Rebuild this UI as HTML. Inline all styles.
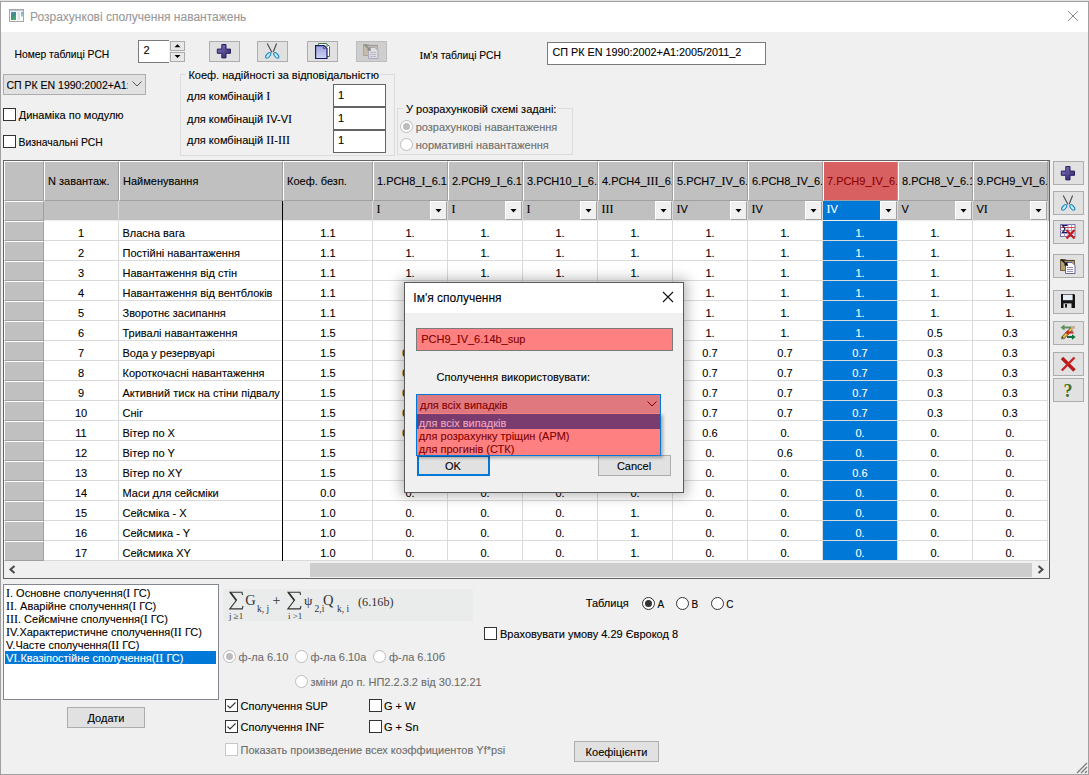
<!DOCTYPE html>
<html><head><meta charset="utf-8"><style>
html,body{margin:0;padding:0;width:1089px;height:775px;overflow:hidden;background:#f0f0f0}
.r{position:absolute}
.clip{position:absolute;overflow:hidden}
.si{font-family:"Liberation Serif",serif;font-size:1.09em}
.t{position:absolute;font-family:"Liberation Sans", sans-serif;white-space:nowrap;-webkit-text-stroke-width:0.1px}
</style></head><body>
<div class="r" style="left:0px;top:0px;width:1089px;height:1px;background:#e2e2e2"></div>
<div class="r" style="left:0px;top:1px;width:1089px;height:774px;background:#f0f0f0;box-sizing:border-box;border:1px solid #a0a0a0;"></div>
<div class="r" style="left:1px;top:2px;width:1087px;height:30px;background:#fff"></div>
<svg class="r" style="left:9px;top:9px" width="15" height="13" viewBox="0 0 15 13">
<defs><linearGradient id="tg" x1="0" y1="0" x2="0.6" y2="1"><stop offset="0" stop-color="#5f86c4"/><stop offset="0.5" stop-color="#3f8e8e"/><stop offset="1" stop-color="#4caa5e"/></linearGradient>
<linearGradient id="tg2" x1="0" y1="0" x2="0" y2="1"><stop offset="0" stop-color="#7fa6d8"/><stop offset="1" stop-color="#9ad89a"/></linearGradient></defs>
<rect x="0.5" y="0.5" width="14" height="12" fill="#fafafa" stroke="#a4a8ae"/>
<rect x="1" y="1" width="13" height="1.2" fill="#c4c8ce"/>
<rect x="2" y="3" width="5" height="8" fill="url(#tg)"/>
<rect x="8.5" y="3" width="2.5" height="8" fill="#e2e2e2"/><rect x="12" y="3" width="2" height="4.5" fill="url(#tg2)"/>
</svg>
<div class="t " style="left:30px;top:11.00px;font-size:12px;line-height:12px;color:#999;">Розрахункові сполучення навантажень</div>
<svg class="r" style="left:1067px;top:10px" width="12" height="12" viewBox="0 0 12 12"><path d="M1 1L11 11M11 1L1 11" stroke="#8a8a8a" stroke-width="1"/></svg>
<div class="t " style="left:14.5px;top:50.00px;font-size:10.3px;line-height:10.3px;color:#000;">Номер таблиці РСН</div>
<div class="r" style="left:138px;top:40px;width:31px;height:23px;background:#fff;border:1px solid #7a7a7a;border-right:none;box-sizing:border-box"></div>
<div class="t " style="left:143.5px;top:45.00px;font-size:11px;line-height:11px;color:#000;">2</div>
<div class="r" style="left:170px;top:41px;width:15px;height:10px;background:#e8e8e8;border:1px solid #acacac;box-sizing:border-box"></div>
<div class="r" style="left:170px;top:52px;width:15px;height:10px;background:#e8e8e8;border:1px solid #acacac;box-sizing:border-box"></div>
<svg class="r" style="left:170px;top:41px" width="15" height="21"><path d="M4.5 6.2L7.5 3.2L10.5 6.2Z" fill="#000"/><path d="M4.5 14L7.5 17L10.5 14Z" fill="#000"/></svg>
<div class="r" style="left:209px;top:41px;width:31px;height:21px;background:#e1e1e1;border:1px solid #adadad;box-sizing:border-box"></div>
<div class="r" style="left:257px;top:41px;width:31px;height:21px;background:#e1e1e1;border:1px solid #adadad;box-sizing:border-box"></div>
<div class="r" style="left:307px;top:41px;width:31px;height:21px;background:#e1e1e1;border:1px solid #adadad;box-sizing:border-box"></div>
<div class="r" style="left:356px;top:41px;width:31px;height:21px;background:#cecece;border:1px solid #bdbdbd;box-sizing:border-box"></div>
<svg class="r" style="left:216px;top:43px;opacity:1" width="16" height="16" viewBox="0 0 16 16"><defs><linearGradient id="pg" x1="0" y1="0" x2="1" y2="1"><stop offset="0" stop-color="#8a7cc8"/><stop offset="1" stop-color="#2a1e60"/></linearGradient></defs><path d="M5.8 1.5h4.2v4.6h4.5v4.2h-4.5v4.6h-4.2v-4.6h-4.5v-4.2h4.5z" fill="url(#pg)" stroke="#2a1e5e" stroke-width="1"/></svg>
<svg class="r" style="left:264px;top:43px;opacity:1" width="16" height="16" viewBox="0 0 16 16"><path d="M3.2 0.5L8 9.6M12.6 0.5L9.2 9" stroke="#4a4a4a" stroke-width="1.1"/><g fill="#c4ecfa" stroke="#1a82b8" stroke-width="1.1"><ellipse cx="4.2" cy="12.4" rx="1.7" ry="3.3" transform="rotate(40 4.2 12.4)"/><ellipse cx="12.3" cy="12.4" rx="1.7" ry="3.3" transform="rotate(-40 12.3 12.4)"/></g></svg>
<svg class="r" style="left:315px;top:43px;opacity:1" width="16" height="16" viewBox="0 0 16 16"><defs><linearGradient id="cg" x1="0" y1="0" x2="0" y2="1"><stop offset="0" stop-color="#9aa4dc"/><stop offset="1" stop-color="#cfd4f0"/></linearGradient></defs><path d="M3.5 0.5h8l3 3v10h-11z" fill="#fff" stroke="#3c7a3c"/><circle cx="12" cy="2.5" r="1" fill="#fff" stroke="#3c7a3c" stroke-width="0.8"/><path d="M0.6 2.6h8.4l3 3v10h-11.4z" fill="url(#cg)" stroke="#1a1866" stroke-width="1.2"/><circle cx="9.3" cy="4.8" r="1" fill="#fff" stroke="#1a1866" stroke-width="0.8"/></svg>
<svg class="r" style="left:363px;top:43px;opacity:0.35" width="16" height="16" viewBox="0 0 16 16"><path d="M0.5 1.5h5l1 1h8v10h-14z" fill="#b4a070" stroke="#6e6040"/><path d="M0.5 2.5h14" stroke="#4a4030" stroke-width="1.2"/><path d="M5.5 4.5h6.5l3 3v8h-9.5z" fill="#fff" stroke="#6a60a0"/><path d="M7 9.5h6M7 11.5h6M7 13.5h6" stroke="#8a84b8" stroke-width="0.9"/><path d="M1.5 1.5L6.5 6.5" stroke="#111" stroke-width="1.5"/><path d="M8 8L3.8 7.2L7.2 3.8z" fill="#111"/></svg>
<div class="t " style="left:419.5px;top:50.00px;font-size:10.3px;line-height:10.3px;color:#000;"><span class="si">І</span>м&#x27;я таблиці РСН</div>
<div class="r" style="left:547px;top:42px;width:219px;height:23px;background:#fff;border:1px solid #7a7a7a;box-sizing:border-box"></div>
<div class="t " style="left:552.5px;top:47.00px;font-size:10.8px;line-height:10.8px;color:#000;">СП РК EN 1990:2002+A1:2005/2011_2</div>
<div class="r" style="left:3px;top:74px;width:143px;height:21px;background:#e1e1e1;border:1px solid #adadad;box-sizing:border-box"></div>
<div class="t " style="left:6.5px;top:79.50px;font-size:10.5px;line-height:10.5px;color:#000;width:121px;overflow:hidden">СП РК EN 1990:2002+A1:2005/2011_2</div>
<svg class="r" style="left:132px;top:81px" width="10" height="6"><path d="M0.5 0.5L5 5L9.5 0.5" fill="none" stroke="#555" stroke-width="1"/></svg>
<div class="r" style="left:3px;top:108px;width:13px;height:13px;background:#fff;border:1px solid #333;box-sizing:border-box"></div>
<div class="t " style="left:18.7px;top:110.00px;font-size:11px;line-height:11px;color:#000;">Динаміка по модулю</div>
<div class="r" style="left:3px;top:135px;width:13px;height:13px;background:#fff;border:1px solid #333;box-sizing:border-box"></div>
<div class="t " style="left:18.5px;top:138.00px;font-size:10.4px;line-height:10.4px;color:#000;">Визначальні РСН</div>
<div class="r" style="left:180px;top:74px;width:215px;height:82px;border:1px solid #dcdcdc;box-sizing:border-box"></div>
<div class="r" style="left:186px;top:70px;width:194px;height:10px;background:#f0f0f0"></div>
<div class="t " style="left:188.4px;top:70.00px;font-size:11px;line-height:11px;color:#000;">Коеф. надійності за відповідальністю</div>
<div class="t " style="left:187px;top:91.00px;font-size:11px;line-height:11px;color:#000;">для комбінацій <span class="si">I</span></div>
<div class="t " style="left:187px;top:114.00px;font-size:11px;line-height:11px;color:#000;">для комбінацій <span class="si">I</span>V-V<span class="si">I</span></div>
<div class="t " style="left:187px;top:135.00px;font-size:11px;line-height:11px;color:#000;">для комбінацій <span class="si">I</span><span class="si">I</span>-<span class="si">I</span><span class="si">I</span><span class="si">I</span></div>
<div class="r" style="left:333px;top:84px;width:53px;height:23px;background:#fff;border:1px solid #646464;box-sizing:border-box"></div>
<div class="r" style="left:333px;top:107px;width:53px;height:23px;background:#fff;border:1px solid #646464;box-sizing:border-box"></div>
<div class="r" style="left:333px;top:130px;width:53px;height:23px;background:#fff;border:1px solid #646464;box-sizing:border-box"></div>
<div class="t " style="left:338px;top:90.00px;font-size:11px;line-height:11px;color:#000;">1</div>
<div class="t " style="left:338px;top:113.00px;font-size:11px;line-height:11px;color:#000;">1</div>
<div class="t " style="left:338px;top:135.00px;font-size:11px;line-height:11px;color:#000;">1</div>
<div class="r" style="left:397px;top:108px;width:176px;height:47px;border:1px solid #dcdcdc;box-sizing:border-box"></div>
<div class="r" style="left:403px;top:104px;width:155px;height:10px;background:#f0f0f0"></div>
<div class="t " style="left:406px;top:104.00px;font-size:11px;line-height:11px;color:#000;">У розрахунковій схемі задані:</div>
<svg class="r" style="left:400px;top:120px" width="13" height="13"><circle cx="6.5" cy="6.5" r="6" fill="#fff" stroke="#bcbcbc"/><circle cx="6.5" cy="6.5" r="3.5" fill="#bcbcbc"/></svg>
<div class="t " style="left:415.7px;top:122.00px;font-size:11px;line-height:11px;color:#6d6d6d;">розрахункові навантаження</div>
<svg class="r" style="left:400px;top:138px" width="13" height="13"><circle cx="6.5" cy="6.5" r="6" fill="#fff" stroke="#bcbcbc"/></svg>
<div class="t " style="left:415.7px;top:140.00px;font-size:11px;line-height:11px;color:#6d6d6d;">нормативні навантаження</div>
<div class="r" style="left:3px;top:160px;width:1047px;height:419px;background:#f0f0f0;border:1px solid #646464;box-sizing:border-box"></div>
<div class="r" style="left:4px;top:161px;width:1045px;height:400px;background:#fff"></div>
<div class="r" style="left:4px;top:161px;width:40px;height:40px;background:#c0c0c0;border-top:1px solid #fff;border-left:1px solid #fff;border-right:1px solid #a0a0a0;border-bottom:1px solid #a0a0a0;box-sizing:border-box"></div>
<div class="r" style="left:44px;top:161px;width:75px;height:40px;background:#c0c0c0;border-top:1px solid #fff;border-left:1px solid #fff;border-right:1px solid #a0a0a0;border-bottom:1px solid #a0a0a0;box-sizing:border-box"></div>
<div class="r" style="left:119px;top:161px;width:164px;height:40px;background:#c0c0c0;border-top:1px solid #fff;border-left:1px solid #fff;border-right:1px solid #a0a0a0;border-bottom:1px solid #a0a0a0;box-sizing:border-box"></div>
<div class="r" style="left:283px;top:161px;width:90px;height:40px;background:#c0c0c0;border-top:1px solid #fff;border-left:1px solid #fff;border-right:1px solid #a0a0a0;border-bottom:1px solid #a0a0a0;box-sizing:border-box"></div>
<div class="r" style="left:373px;top:161px;width:75px;height:40px;background:#c0c0c0;border-top:1px solid #fff;border-left:1px solid #fff;border-right:1px solid #a0a0a0;border-bottom:1px solid #a0a0a0;box-sizing:border-box"></div>
<div class="r" style="left:448px;top:161px;width:75px;height:40px;background:#c0c0c0;border-top:1px solid #fff;border-left:1px solid #fff;border-right:1px solid #a0a0a0;border-bottom:1px solid #a0a0a0;box-sizing:border-box"></div>
<div class="r" style="left:523px;top:161px;width:75px;height:40px;background:#c0c0c0;border-top:1px solid #fff;border-left:1px solid #fff;border-right:1px solid #a0a0a0;border-bottom:1px solid #a0a0a0;box-sizing:border-box"></div>
<div class="r" style="left:598px;top:161px;width:75px;height:40px;background:#c0c0c0;border-top:1px solid #fff;border-left:1px solid #fff;border-right:1px solid #a0a0a0;border-bottom:1px solid #a0a0a0;box-sizing:border-box"></div>
<div class="r" style="left:673px;top:161px;width:75px;height:40px;background:#c0c0c0;border-top:1px solid #fff;border-left:1px solid #fff;border-right:1px solid #a0a0a0;border-bottom:1px solid #a0a0a0;box-sizing:border-box"></div>
<div class="r" style="left:748px;top:161px;width:75px;height:40px;background:#c0c0c0;border-top:1px solid #fff;border-left:1px solid #fff;border-right:1px solid #a0a0a0;border-bottom:1px solid #a0a0a0;box-sizing:border-box"></div>
<div class="r" style="left:823px;top:161px;width:75px;height:40px;background:#d96060;border-top:1px solid #fff;border-left:1px solid #fff;border-right:1px solid #a0a0a0;border-bottom:1px solid #a0a0a0;box-sizing:border-box"></div>
<div class="r" style="left:898px;top:161px;width:75px;height:40px;background:#c0c0c0;border-top:1px solid #fff;border-left:1px solid #fff;border-right:1px solid #a0a0a0;border-bottom:1px solid #a0a0a0;box-sizing:border-box"></div>
<div class="r" style="left:973px;top:161px;width:75px;height:40px;background:#c0c0c0;border-top:1px solid #fff;border-left:1px solid #fff;border-right:1px solid #a0a0a0;border-bottom:1px solid #a0a0a0;box-sizing:border-box"></div>
<div class="r" style="left:1048px;top:161px;width:1px;height:60px;background:#c0c0c0"></div>
<div class="r" style="left:4px;top:201px;width:40px;height:19px;background:#c0c0c0"></div>
<div class="r" style="left:43px;top:201px;width:76px;height:19px;background:#c0c0c0"></div>
<div class="r" style="left:118px;top:201px;width:165px;height:19px;background:#c0c0c0"></div>
<div class="r" style="left:282px;top:201px;width:91px;height:19px;background:#c0c0c0"></div>
<div class="r" style="left:372px;top:201px;width:76px;height:19px;background:#c0c0c0"></div>
<div class="r" style="left:447px;top:201px;width:76px;height:19px;background:#c0c0c0"></div>
<div class="r" style="left:522px;top:201px;width:76px;height:19px;background:#c0c0c0"></div>
<div class="r" style="left:597px;top:201px;width:76px;height:19px;background:#c0c0c0"></div>
<div class="r" style="left:672px;top:201px;width:76px;height:19px;background:#c0c0c0"></div>
<div class="r" style="left:747px;top:201px;width:76px;height:19px;background:#c0c0c0"></div>
<div class="r" style="left:822px;top:201px;width:76px;height:19px;background:#c0c0c0"></div>
<div class="r" style="left:897px;top:201px;width:76px;height:19px;background:#c0c0c0"></div>
<div class="r" style="left:972px;top:201px;width:76px;height:19px;background:#c0c0c0"></div>
<div class="r" style="left:44px;top:220px;width:1004px;height:1px;background:#ececec"></div>
<div class="r" style="left:4px;top:201px;width:40px;height:20px;background:#c0c0c0;border-top:1px solid #fff;border-left:1px solid #fff;border-right:1px solid #a0a0a0;border-bottom:1px solid #a0a0a0;box-sizing:border-box"></div>
<div class="clip" style="left:44px;top:161px;width:74px;height:40px">
<div class="t" style="left:4px;top:14.69px;font-size:11px;line-height:11px;color:#000">N завантаж.</div>
</div>
<div class="clip" style="left:119px;top:161px;width:163px;height:40px">
<div class="t" style="left:4px;top:14.69px;font-size:11px;line-height:11px;color:#000">Найменування</div>
</div>
<div class="clip" style="left:283px;top:161px;width:89px;height:40px">
<div class="t" style="left:4px;top:14.69px;font-size:11px;line-height:11px;color:#000">Коеф. безп.</div>
</div>
<div class="clip" style="left:373px;top:161px;width:74px;height:40px">
<div class="t" style="left:4px;top:14.69px;font-size:11px;line-height:11px;color:#000">1.РСН8_<span class="si">I</span>_6.10</div>
</div>
<div class="clip" style="left:448px;top:161px;width:74px;height:40px">
<div class="t" style="left:4px;top:14.69px;font-size:11px;line-height:11px;color:#000">2.РСН9_<span class="si">I</span>_6.10</div>
</div>
<div class="clip" style="left:523px;top:161px;width:74px;height:40px">
<div class="t" style="left:4px;top:14.69px;font-size:11px;line-height:11px;color:#000">3.РСН10_<span class="si">I</span>_6.1</div>
</div>
<div class="clip" style="left:598px;top:161px;width:74px;height:40px">
<div class="t" style="left:4px;top:14.69px;font-size:11px;line-height:11px;color:#000">4.РСН4_<span class="si">I</span><span class="si">I</span><span class="si">I</span>_6.1</div>
</div>
<div class="clip" style="left:673px;top:161px;width:74px;height:40px">
<div class="t" style="left:4px;top:14.69px;font-size:11px;line-height:11px;color:#000">5.РСН7_<span class="si">I</span>V_6.1</div>
</div>
<div class="clip" style="left:748px;top:161px;width:74px;height:40px">
<div class="t" style="left:4px;top:14.69px;font-size:11px;line-height:11px;color:#000">6.РСН8_<span class="si">I</span>V_6.1</div>
</div>
<div class="clip" style="left:823px;top:161px;width:74px;height:40px">
<div class="t" style="left:4px;top:14.69px;font-size:11px;line-height:11px;color:#8c0000">7.РСН9_<span class="si">I</span>V_6.1</div>
</div>
<div class="clip" style="left:898px;top:161px;width:74px;height:40px">
<div class="t" style="left:4px;top:14.69px;font-size:11px;line-height:11px;color:#000">8.РСН8_V_6.1</div>
</div>
<div class="clip" style="left:973px;top:161px;width:74px;height:40px">
<div class="t" style="left:4px;top:14.69px;font-size:11px;line-height:11px;color:#000">9.РСН9_V<span class="si">I</span>_6.1</div>
</div>
<div class="t " style="left:376.5px;top:204.00px;font-size:11px;line-height:11px;color:#000;"><span class="si">I</span></div>
<div class="r" style="left:430px;top:201px;width:17px;height:19px;background:#f0f0f0;border-left:1px solid #fff;border-top:1px solid #fff;border-right:1px solid #a0a0a0;border-bottom:1px solid #a0a0a0;box-sizing:border-box"></div>
<svg class="r" style="left:430px;top:201px" width="17" height="19"><path d="M5.5 8L8.5 11.5L11.5 8Z" fill="#000"/></svg>
<div class="t " style="left:451.5px;top:204.00px;font-size:11px;line-height:11px;color:#000;"><span class="si">I</span></div>
<div class="r" style="left:505px;top:201px;width:17px;height:19px;background:#f0f0f0;border-left:1px solid #fff;border-top:1px solid #fff;border-right:1px solid #a0a0a0;border-bottom:1px solid #a0a0a0;box-sizing:border-box"></div>
<svg class="r" style="left:505px;top:201px" width="17" height="19"><path d="M5.5 8L8.5 11.5L11.5 8Z" fill="#000"/></svg>
<div class="t " style="left:526.5px;top:204.00px;font-size:11px;line-height:11px;color:#000;"><span class="si">I</span></div>
<div class="r" style="left:580px;top:201px;width:17px;height:19px;background:#f0f0f0;border-left:1px solid #fff;border-top:1px solid #fff;border-right:1px solid #a0a0a0;border-bottom:1px solid #a0a0a0;box-sizing:border-box"></div>
<svg class="r" style="left:580px;top:201px" width="17" height="19"><path d="M5.5 8L8.5 11.5L11.5 8Z" fill="#000"/></svg>
<div class="t " style="left:601.5px;top:204.00px;font-size:11px;line-height:11px;color:#000;"><span class="si">I</span><span class="si">I</span><span class="si">I</span></div>
<div class="r" style="left:655px;top:201px;width:17px;height:19px;background:#f0f0f0;border-left:1px solid #fff;border-top:1px solid #fff;border-right:1px solid #a0a0a0;border-bottom:1px solid #a0a0a0;box-sizing:border-box"></div>
<svg class="r" style="left:655px;top:201px" width="17" height="19"><path d="M5.5 8L8.5 11.5L11.5 8Z" fill="#000"/></svg>
<div class="t " style="left:676.5px;top:204.00px;font-size:11px;line-height:11px;color:#000;"><span class="si">I</span>V</div>
<div class="r" style="left:730px;top:201px;width:17px;height:19px;background:#f0f0f0;border-left:1px solid #fff;border-top:1px solid #fff;border-right:1px solid #a0a0a0;border-bottom:1px solid #a0a0a0;box-sizing:border-box"></div>
<svg class="r" style="left:730px;top:201px" width="17" height="19"><path d="M5.5 8L8.5 11.5L11.5 8Z" fill="#000"/></svg>
<div class="t " style="left:751.5px;top:204.00px;font-size:11px;line-height:11px;color:#000;"><span class="si">I</span>V</div>
<div class="r" style="left:805px;top:201px;width:17px;height:19px;background:#f0f0f0;border-left:1px solid #fff;border-top:1px solid #fff;border-right:1px solid #a0a0a0;border-bottom:1px solid #a0a0a0;box-sizing:border-box"></div>
<svg class="r" style="left:805px;top:201px" width="17" height="19"><path d="M5.5 8L8.5 11.5L11.5 8Z" fill="#000"/></svg>
<div class="r" style="left:823px;top:201px;width:57px;height:19px;background:#0078d7"></div>
<div class="t " style="left:826.5px;top:204.00px;font-size:11px;line-height:11px;color:#fff;"><span class="si">I</span>V</div>
<div class="r" style="left:880px;top:201px;width:17px;height:19px;background:#f0f0f0;border-left:1px solid #fff;border-top:1px solid #fff;border-right:1px solid #a0a0a0;border-bottom:1px solid #a0a0a0;box-sizing:border-box"></div>
<svg class="r" style="left:880px;top:201px" width="17" height="19"><path d="M5.5 8L8.5 11.5L11.5 8Z" fill="#000"/></svg>
<div class="t " style="left:901.5px;top:204.00px;font-size:11px;line-height:11px;color:#000;">V</div>
<div class="r" style="left:955px;top:201px;width:17px;height:19px;background:#f0f0f0;border-left:1px solid #fff;border-top:1px solid #fff;border-right:1px solid #a0a0a0;border-bottom:1px solid #a0a0a0;box-sizing:border-box"></div>
<svg class="r" style="left:955px;top:201px" width="17" height="19"><path d="M5.5 8L8.5 11.5L11.5 8Z" fill="#000"/></svg>
<div class="t " style="left:976.5px;top:204.00px;font-size:11px;line-height:11px;color:#000;">V<span class="si">I</span></div>
<div class="r" style="left:1030px;top:201px;width:17px;height:19px;background:#f0f0f0;border-left:1px solid #fff;border-top:1px solid #fff;border-right:1px solid #a0a0a0;border-bottom:1px solid #a0a0a0;box-sizing:border-box"></div>
<svg class="r" style="left:1030px;top:201px" width="17" height="19"><path d="M5.5 8L8.5 11.5L11.5 8Z" fill="#000"/></svg>
<div class="r" style="left:4px;top:221px;width:40px;height:20px;background:#c0c0c0;border-top:1px solid #fff;border-left:1px solid #fff;border-right:1px solid #a0a0a0;border-bottom:1px solid #a0a0a0;box-sizing:border-box"></div>
<div class="r" style="left:823px;top:221px;width:75px;height:19px;background:#0078d7"></div>
<div class="r" style="left:44px;top:240px;width:1004px;height:1px;background:#dadada"></div>
<div class="t" style="left:-19px;width:200px;text-align:center;top:228.00px;font-size:11px;line-height:11px;color:#000;">1</div>
<div class="clip" style="left:119px;top:221px;width:163px;height:19px"><div class="t" style="left:3.5px;top:6.69px;font-size:11px;line-height:11px">Власна вага</div></div>
<div class="t" style="left:228px;width:200px;text-align:center;top:228.00px;font-size:11px;line-height:11px;color:#000;">1.1</div>
<div class="t" style="left:310px;width:200px;text-align:center;top:228.00px;font-size:11px;line-height:11px;color:#000;">1.</div>
<div class="t" style="left:385px;width:200px;text-align:center;top:228.00px;font-size:11px;line-height:11px;color:#000;">1.</div>
<div class="t" style="left:460px;width:200px;text-align:center;top:228.00px;font-size:11px;line-height:11px;color:#000;">1.</div>
<div class="t" style="left:535px;width:200px;text-align:center;top:228.00px;font-size:11px;line-height:11px;color:#000;">1.</div>
<div class="t" style="left:610px;width:200px;text-align:center;top:228.00px;font-size:11px;line-height:11px;color:#000;">1.</div>
<div class="t" style="left:685px;width:200px;text-align:center;top:228.00px;font-size:11px;line-height:11px;color:#000;">1.</div>
<div class="t" style="left:760px;width:200px;text-align:center;top:228.00px;font-size:11px;line-height:11px;color:#fff;">1.</div>
<div class="t" style="left:835px;width:200px;text-align:center;top:228.00px;font-size:11px;line-height:11px;color:#000;">1.</div>
<div class="t" style="left:910px;width:200px;text-align:center;top:228.00px;font-size:11px;line-height:11px;color:#000;">1.</div>
<div class="r" style="left:4px;top:241px;width:40px;height:20px;background:#c0c0c0;border-top:1px solid #fff;border-left:1px solid #fff;border-right:1px solid #a0a0a0;border-bottom:1px solid #a0a0a0;box-sizing:border-box"></div>
<div class="r" style="left:823px;top:241px;width:75px;height:19px;background:#0078d7"></div>
<div class="r" style="left:44px;top:260px;width:1004px;height:1px;background:#dadada"></div>
<div class="t" style="left:-19px;width:200px;text-align:center;top:248.00px;font-size:11px;line-height:11px;color:#000;">2</div>
<div class="clip" style="left:119px;top:241px;width:163px;height:19px"><div class="t" style="left:3.5px;top:6.69px;font-size:11px;line-height:11px">Постійні навантаження</div></div>
<div class="t" style="left:228px;width:200px;text-align:center;top:248.00px;font-size:11px;line-height:11px;color:#000;">1.1</div>
<div class="t" style="left:310px;width:200px;text-align:center;top:248.00px;font-size:11px;line-height:11px;color:#000;">1.</div>
<div class="t" style="left:385px;width:200px;text-align:center;top:248.00px;font-size:11px;line-height:11px;color:#000;">1.</div>
<div class="t" style="left:460px;width:200px;text-align:center;top:248.00px;font-size:11px;line-height:11px;color:#000;">1.</div>
<div class="t" style="left:535px;width:200px;text-align:center;top:248.00px;font-size:11px;line-height:11px;color:#000;">1.</div>
<div class="t" style="left:610px;width:200px;text-align:center;top:248.00px;font-size:11px;line-height:11px;color:#000;">1.</div>
<div class="t" style="left:685px;width:200px;text-align:center;top:248.00px;font-size:11px;line-height:11px;color:#000;">1.</div>
<div class="t" style="left:760px;width:200px;text-align:center;top:248.00px;font-size:11px;line-height:11px;color:#fff;">1.</div>
<div class="t" style="left:835px;width:200px;text-align:center;top:248.00px;font-size:11px;line-height:11px;color:#000;">1.</div>
<div class="t" style="left:910px;width:200px;text-align:center;top:248.00px;font-size:11px;line-height:11px;color:#000;">1.</div>
<div class="r" style="left:4px;top:261px;width:40px;height:20px;background:#c0c0c0;border-top:1px solid #fff;border-left:1px solid #fff;border-right:1px solid #a0a0a0;border-bottom:1px solid #a0a0a0;box-sizing:border-box"></div>
<div class="r" style="left:823px;top:261px;width:75px;height:19px;background:#0078d7"></div>
<div class="r" style="left:44px;top:280px;width:1004px;height:1px;background:#dadada"></div>
<div class="t" style="left:-19px;width:200px;text-align:center;top:268.00px;font-size:11px;line-height:11px;color:#000;">3</div>
<div class="clip" style="left:119px;top:261px;width:163px;height:19px"><div class="t" style="left:3.5px;top:6.69px;font-size:11px;line-height:11px">Навантаження від стін</div></div>
<div class="t" style="left:228px;width:200px;text-align:center;top:268.00px;font-size:11px;line-height:11px;color:#000;">1.1</div>
<div class="t" style="left:310px;width:200px;text-align:center;top:268.00px;font-size:11px;line-height:11px;color:#000;">1.</div>
<div class="t" style="left:385px;width:200px;text-align:center;top:268.00px;font-size:11px;line-height:11px;color:#000;">1.</div>
<div class="t" style="left:460px;width:200px;text-align:center;top:268.00px;font-size:11px;line-height:11px;color:#000;">1.</div>
<div class="t" style="left:535px;width:200px;text-align:center;top:268.00px;font-size:11px;line-height:11px;color:#000;">1.</div>
<div class="t" style="left:610px;width:200px;text-align:center;top:268.00px;font-size:11px;line-height:11px;color:#000;">1.</div>
<div class="t" style="left:685px;width:200px;text-align:center;top:268.00px;font-size:11px;line-height:11px;color:#000;">1.</div>
<div class="t" style="left:760px;width:200px;text-align:center;top:268.00px;font-size:11px;line-height:11px;color:#fff;">1.</div>
<div class="t" style="left:835px;width:200px;text-align:center;top:268.00px;font-size:11px;line-height:11px;color:#000;">1.</div>
<div class="t" style="left:910px;width:200px;text-align:center;top:268.00px;font-size:11px;line-height:11px;color:#000;">1.</div>
<div class="r" style="left:4px;top:281px;width:40px;height:20px;background:#c0c0c0;border-top:1px solid #fff;border-left:1px solid #fff;border-right:1px solid #a0a0a0;border-bottom:1px solid #a0a0a0;box-sizing:border-box"></div>
<div class="r" style="left:823px;top:281px;width:75px;height:19px;background:#0078d7"></div>
<div class="r" style="left:44px;top:300px;width:1004px;height:1px;background:#dadada"></div>
<div class="t" style="left:-19px;width:200px;text-align:center;top:288.00px;font-size:11px;line-height:11px;color:#000;">4</div>
<div class="clip" style="left:119px;top:281px;width:163px;height:19px"><div class="t" style="left:3.5px;top:6.69px;font-size:11px;line-height:11px">Навантаження від вентблоків</div></div>
<div class="t" style="left:228px;width:200px;text-align:center;top:288.00px;font-size:11px;line-height:11px;color:#000;">1.1</div>
<div class="t" style="left:310px;width:200px;text-align:center;top:288.00px;font-size:11px;line-height:11px;color:#000;">1.</div>
<div class="t" style="left:385px;width:200px;text-align:center;top:288.00px;font-size:11px;line-height:11px;color:#000;">1.</div>
<div class="t" style="left:460px;width:200px;text-align:center;top:288.00px;font-size:11px;line-height:11px;color:#000;">1.</div>
<div class="t" style="left:535px;width:200px;text-align:center;top:288.00px;font-size:11px;line-height:11px;color:#000;">1.</div>
<div class="t" style="left:610px;width:200px;text-align:center;top:288.00px;font-size:11px;line-height:11px;color:#000;">1.</div>
<div class="t" style="left:685px;width:200px;text-align:center;top:288.00px;font-size:11px;line-height:11px;color:#000;">1.</div>
<div class="t" style="left:760px;width:200px;text-align:center;top:288.00px;font-size:11px;line-height:11px;color:#fff;">1.</div>
<div class="t" style="left:835px;width:200px;text-align:center;top:288.00px;font-size:11px;line-height:11px;color:#000;">1.</div>
<div class="t" style="left:910px;width:200px;text-align:center;top:288.00px;font-size:11px;line-height:11px;color:#000;">1.</div>
<div class="r" style="left:4px;top:301px;width:40px;height:20px;background:#c0c0c0;border-top:1px solid #fff;border-left:1px solid #fff;border-right:1px solid #a0a0a0;border-bottom:1px solid #a0a0a0;box-sizing:border-box"></div>
<div class="r" style="left:823px;top:301px;width:75px;height:19px;background:#0078d7"></div>
<div class="r" style="left:44px;top:320px;width:1004px;height:1px;background:#dadada"></div>
<div class="t" style="left:-19px;width:200px;text-align:center;top:308.00px;font-size:11px;line-height:11px;color:#000;">5</div>
<div class="clip" style="left:119px;top:301px;width:163px;height:19px"><div class="t" style="left:3.5px;top:6.69px;font-size:11px;line-height:11px">Зворотнє засипання</div></div>
<div class="t" style="left:228px;width:200px;text-align:center;top:308.00px;font-size:11px;line-height:11px;color:#000;">1.1</div>
<div class="t" style="left:310px;width:200px;text-align:center;top:308.00px;font-size:11px;line-height:11px;color:#000;">1.</div>
<div class="t" style="left:385px;width:200px;text-align:center;top:308.00px;font-size:11px;line-height:11px;color:#000;">1.</div>
<div class="t" style="left:460px;width:200px;text-align:center;top:308.00px;font-size:11px;line-height:11px;color:#000;">1.</div>
<div class="t" style="left:535px;width:200px;text-align:center;top:308.00px;font-size:11px;line-height:11px;color:#000;">1.</div>
<div class="t" style="left:610px;width:200px;text-align:center;top:308.00px;font-size:11px;line-height:11px;color:#000;">1.</div>
<div class="t" style="left:685px;width:200px;text-align:center;top:308.00px;font-size:11px;line-height:11px;color:#000;">1.</div>
<div class="t" style="left:760px;width:200px;text-align:center;top:308.00px;font-size:11px;line-height:11px;color:#fff;">1.</div>
<div class="t" style="left:835px;width:200px;text-align:center;top:308.00px;font-size:11px;line-height:11px;color:#000;">1.</div>
<div class="t" style="left:910px;width:200px;text-align:center;top:308.00px;font-size:11px;line-height:11px;color:#000;">1.</div>
<div class="r" style="left:4px;top:321px;width:40px;height:20px;background:#c0c0c0;border-top:1px solid #fff;border-left:1px solid #fff;border-right:1px solid #a0a0a0;border-bottom:1px solid #a0a0a0;box-sizing:border-box"></div>
<div class="r" style="left:823px;top:321px;width:75px;height:19px;background:#0078d7"></div>
<div class="r" style="left:44px;top:340px;width:1004px;height:1px;background:#dadada"></div>
<div class="t" style="left:-19px;width:200px;text-align:center;top:328.00px;font-size:11px;line-height:11px;color:#000;">6</div>
<div class="clip" style="left:119px;top:321px;width:163px;height:19px"><div class="t" style="left:3.5px;top:6.69px;font-size:11px;line-height:11px">Тривалі навантаження</div></div>
<div class="t" style="left:228px;width:200px;text-align:center;top:328.00px;font-size:11px;line-height:11px;color:#000;">1.5</div>
<div class="t" style="left:310px;width:200px;text-align:center;top:328.00px;font-size:11px;line-height:11px;color:#000;">1.</div>
<div class="t" style="left:385px;width:200px;text-align:center;top:328.00px;font-size:11px;line-height:11px;color:#000;">1.</div>
<div class="t" style="left:460px;width:200px;text-align:center;top:328.00px;font-size:11px;line-height:11px;color:#000;">1.</div>
<div class="t" style="left:535px;width:200px;text-align:center;top:328.00px;font-size:11px;line-height:11px;color:#000;">1.</div>
<div class="t" style="left:610px;width:200px;text-align:center;top:328.00px;font-size:11px;line-height:11px;color:#000;">1.</div>
<div class="t" style="left:685px;width:200px;text-align:center;top:328.00px;font-size:11px;line-height:11px;color:#000;">1.</div>
<div class="t" style="left:760px;width:200px;text-align:center;top:328.00px;font-size:11px;line-height:11px;color:#fff;">1.</div>
<div class="t" style="left:835px;width:200px;text-align:center;top:328.00px;font-size:11px;line-height:11px;color:#000;">0.5</div>
<div class="t" style="left:910px;width:200px;text-align:center;top:328.00px;font-size:11px;line-height:11px;color:#000;">0.3</div>
<div class="r" style="left:4px;top:341px;width:40px;height:20px;background:#c0c0c0;border-top:1px solid #fff;border-left:1px solid #fff;border-right:1px solid #a0a0a0;border-bottom:1px solid #a0a0a0;box-sizing:border-box"></div>
<div class="r" style="left:823px;top:341px;width:75px;height:19px;background:#0078d7"></div>
<div class="r" style="left:44px;top:360px;width:1004px;height:1px;background:#dadada"></div>
<div class="t" style="left:-19px;width:200px;text-align:center;top:348.00px;font-size:11px;line-height:11px;color:#000;">7</div>
<div class="clip" style="left:119px;top:341px;width:163px;height:19px"><div class="t" style="left:3.5px;top:6.69px;font-size:11px;line-height:11px">Вода у резервуарі</div></div>
<div class="t" style="left:228px;width:200px;text-align:center;top:348.00px;font-size:11px;line-height:11px;color:#000;">1.5</div>
<div class="t" style="left:310px;width:200px;text-align:center;top:348.00px;font-size:11px;line-height:11px;color:#000;">0.7</div>
<div class="t" style="left:385px;width:200px;text-align:center;top:348.00px;font-size:11px;line-height:11px;color:#000;">0.7</div>
<div class="t" style="left:460px;width:200px;text-align:center;top:348.00px;font-size:11px;line-height:11px;color:#000;">0.7</div>
<div class="t" style="left:535px;width:200px;text-align:center;top:348.00px;font-size:11px;line-height:11px;color:#000;">0.7</div>
<div class="t" style="left:610px;width:200px;text-align:center;top:348.00px;font-size:11px;line-height:11px;color:#000;">0.7</div>
<div class="t" style="left:685px;width:200px;text-align:center;top:348.00px;font-size:11px;line-height:11px;color:#000;">0.7</div>
<div class="t" style="left:760px;width:200px;text-align:center;top:348.00px;font-size:11px;line-height:11px;color:#fff;">0.7</div>
<div class="t" style="left:835px;width:200px;text-align:center;top:348.00px;font-size:11px;line-height:11px;color:#000;">0.3</div>
<div class="t" style="left:910px;width:200px;text-align:center;top:348.00px;font-size:11px;line-height:11px;color:#000;">0.3</div>
<div class="r" style="left:4px;top:361px;width:40px;height:20px;background:#c0c0c0;border-top:1px solid #fff;border-left:1px solid #fff;border-right:1px solid #a0a0a0;border-bottom:1px solid #a0a0a0;box-sizing:border-box"></div>
<div class="r" style="left:823px;top:361px;width:75px;height:19px;background:#0078d7"></div>
<div class="r" style="left:44px;top:380px;width:1004px;height:1px;background:#dadada"></div>
<div class="t" style="left:-19px;width:200px;text-align:center;top:368.00px;font-size:11px;line-height:11px;color:#000;">8</div>
<div class="clip" style="left:119px;top:361px;width:163px;height:19px"><div class="t" style="left:3.5px;top:6.69px;font-size:11px;line-height:11px">Короткочасні навантаження</div></div>
<div class="t" style="left:228px;width:200px;text-align:center;top:368.00px;font-size:11px;line-height:11px;color:#000;">1.5</div>
<div class="t" style="left:310px;width:200px;text-align:center;top:368.00px;font-size:11px;line-height:11px;color:#000;">0.7</div>
<div class="t" style="left:385px;width:200px;text-align:center;top:368.00px;font-size:11px;line-height:11px;color:#000;">0.7</div>
<div class="t" style="left:460px;width:200px;text-align:center;top:368.00px;font-size:11px;line-height:11px;color:#000;">0.7</div>
<div class="t" style="left:535px;width:200px;text-align:center;top:368.00px;font-size:11px;line-height:11px;color:#000;">0.7</div>
<div class="t" style="left:610px;width:200px;text-align:center;top:368.00px;font-size:11px;line-height:11px;color:#000;">0.7</div>
<div class="t" style="left:685px;width:200px;text-align:center;top:368.00px;font-size:11px;line-height:11px;color:#000;">0.7</div>
<div class="t" style="left:760px;width:200px;text-align:center;top:368.00px;font-size:11px;line-height:11px;color:#fff;">0.7</div>
<div class="t" style="left:835px;width:200px;text-align:center;top:368.00px;font-size:11px;line-height:11px;color:#000;">0.3</div>
<div class="t" style="left:910px;width:200px;text-align:center;top:368.00px;font-size:11px;line-height:11px;color:#000;">0.3</div>
<div class="r" style="left:4px;top:381px;width:40px;height:20px;background:#c0c0c0;border-top:1px solid #fff;border-left:1px solid #fff;border-right:1px solid #a0a0a0;border-bottom:1px solid #a0a0a0;box-sizing:border-box"></div>
<div class="r" style="left:823px;top:381px;width:75px;height:19px;background:#0078d7"></div>
<div class="r" style="left:44px;top:400px;width:1004px;height:1px;background:#dadada"></div>
<div class="t" style="left:-19px;width:200px;text-align:center;top:388.00px;font-size:11px;line-height:11px;color:#000;">9</div>
<div class="clip" style="left:119px;top:381px;width:163px;height:19px"><div class="t" style="left:3.5px;top:6.69px;font-size:11px;line-height:11px">Активний тиск на стіни підвалу</div></div>
<div class="t" style="left:228px;width:200px;text-align:center;top:388.00px;font-size:11px;line-height:11px;color:#000;">1.5</div>
<div class="t" style="left:310px;width:200px;text-align:center;top:388.00px;font-size:11px;line-height:11px;color:#000;">0.7</div>
<div class="t" style="left:385px;width:200px;text-align:center;top:388.00px;font-size:11px;line-height:11px;color:#000;">0.7</div>
<div class="t" style="left:460px;width:200px;text-align:center;top:388.00px;font-size:11px;line-height:11px;color:#000;">0.7</div>
<div class="t" style="left:535px;width:200px;text-align:center;top:388.00px;font-size:11px;line-height:11px;color:#000;">0.7</div>
<div class="t" style="left:610px;width:200px;text-align:center;top:388.00px;font-size:11px;line-height:11px;color:#000;">0.7</div>
<div class="t" style="left:685px;width:200px;text-align:center;top:388.00px;font-size:11px;line-height:11px;color:#000;">0.7</div>
<div class="t" style="left:760px;width:200px;text-align:center;top:388.00px;font-size:11px;line-height:11px;color:#fff;">0.7</div>
<div class="t" style="left:835px;width:200px;text-align:center;top:388.00px;font-size:11px;line-height:11px;color:#000;">0.3</div>
<div class="t" style="left:910px;width:200px;text-align:center;top:388.00px;font-size:11px;line-height:11px;color:#000;">0.3</div>
<div class="r" style="left:4px;top:401px;width:40px;height:20px;background:#c0c0c0;border-top:1px solid #fff;border-left:1px solid #fff;border-right:1px solid #a0a0a0;border-bottom:1px solid #a0a0a0;box-sizing:border-box"></div>
<div class="r" style="left:823px;top:401px;width:75px;height:19px;background:#0078d7"></div>
<div class="r" style="left:44px;top:420px;width:1004px;height:1px;background:#dadada"></div>
<div class="t" style="left:-19px;width:200px;text-align:center;top:408.00px;font-size:11px;line-height:11px;color:#000;">10</div>
<div class="clip" style="left:119px;top:401px;width:163px;height:19px"><div class="t" style="left:3.5px;top:6.69px;font-size:11px;line-height:11px">Сніг</div></div>
<div class="t" style="left:228px;width:200px;text-align:center;top:408.00px;font-size:11px;line-height:11px;color:#000;">1.5</div>
<div class="t" style="left:310px;width:200px;text-align:center;top:408.00px;font-size:11px;line-height:11px;color:#000;">0.7</div>
<div class="t" style="left:385px;width:200px;text-align:center;top:408.00px;font-size:11px;line-height:11px;color:#000;">0.7</div>
<div class="t" style="left:460px;width:200px;text-align:center;top:408.00px;font-size:11px;line-height:11px;color:#000;">0.7</div>
<div class="t" style="left:535px;width:200px;text-align:center;top:408.00px;font-size:11px;line-height:11px;color:#000;">0.7</div>
<div class="t" style="left:610px;width:200px;text-align:center;top:408.00px;font-size:11px;line-height:11px;color:#000;">0.7</div>
<div class="t" style="left:685px;width:200px;text-align:center;top:408.00px;font-size:11px;line-height:11px;color:#000;">0.7</div>
<div class="t" style="left:760px;width:200px;text-align:center;top:408.00px;font-size:11px;line-height:11px;color:#fff;">0.7</div>
<div class="t" style="left:835px;width:200px;text-align:center;top:408.00px;font-size:11px;line-height:11px;color:#000;">0.3</div>
<div class="t" style="left:910px;width:200px;text-align:center;top:408.00px;font-size:11px;line-height:11px;color:#000;">0.3</div>
<div class="r" style="left:4px;top:421px;width:40px;height:20px;background:#c0c0c0;border-top:1px solid #fff;border-left:1px solid #fff;border-right:1px solid #a0a0a0;border-bottom:1px solid #a0a0a0;box-sizing:border-box"></div>
<div class="r" style="left:823px;top:421px;width:75px;height:19px;background:#0078d7"></div>
<div class="r" style="left:44px;top:440px;width:1004px;height:1px;background:#dadada"></div>
<div class="t" style="left:-19px;width:200px;text-align:center;top:428.00px;font-size:11px;line-height:11px;color:#000;">11</div>
<div class="clip" style="left:119px;top:421px;width:163px;height:19px"><div class="t" style="left:3.5px;top:6.69px;font-size:11px;line-height:11px">Вітер по X</div></div>
<div class="t" style="left:228px;width:200px;text-align:center;top:428.00px;font-size:11px;line-height:11px;color:#000;">1.5</div>
<div class="t" style="left:310px;width:200px;text-align:center;top:428.00px;font-size:11px;line-height:11px;color:#000;">0.6</div>
<div class="t" style="left:385px;width:200px;text-align:center;top:428.00px;font-size:11px;line-height:11px;color:#000;">0.</div>
<div class="t" style="left:460px;width:200px;text-align:center;top:428.00px;font-size:11px;line-height:11px;color:#000;">0.</div>
<div class="t" style="left:535px;width:200px;text-align:center;top:428.00px;font-size:11px;line-height:11px;color:#000;">0.</div>
<div class="t" style="left:610px;width:200px;text-align:center;top:428.00px;font-size:11px;line-height:11px;color:#000;">0.6</div>
<div class="t" style="left:685px;width:200px;text-align:center;top:428.00px;font-size:11px;line-height:11px;color:#000;">0.</div>
<div class="t" style="left:760px;width:200px;text-align:center;top:428.00px;font-size:11px;line-height:11px;color:#fff;">0.</div>
<div class="t" style="left:835px;width:200px;text-align:center;top:428.00px;font-size:11px;line-height:11px;color:#000;">0.</div>
<div class="t" style="left:910px;width:200px;text-align:center;top:428.00px;font-size:11px;line-height:11px;color:#000;">0.</div>
<div class="r" style="left:4px;top:441px;width:40px;height:20px;background:#c0c0c0;border-top:1px solid #fff;border-left:1px solid #fff;border-right:1px solid #a0a0a0;border-bottom:1px solid #a0a0a0;box-sizing:border-box"></div>
<div class="r" style="left:823px;top:441px;width:75px;height:19px;background:#0078d7"></div>
<div class="r" style="left:44px;top:460px;width:1004px;height:1px;background:#dadada"></div>
<div class="t" style="left:-19px;width:200px;text-align:center;top:448.00px;font-size:11px;line-height:11px;color:#000;">12</div>
<div class="clip" style="left:119px;top:441px;width:163px;height:19px"><div class="t" style="left:3.5px;top:6.69px;font-size:11px;line-height:11px">Вітер по Y</div></div>
<div class="t" style="left:228px;width:200px;text-align:center;top:448.00px;font-size:11px;line-height:11px;color:#000;">1.5</div>
<div class="t" style="left:310px;width:200px;text-align:center;top:448.00px;font-size:11px;line-height:11px;color:#000;">0.</div>
<div class="t" style="left:385px;width:200px;text-align:center;top:448.00px;font-size:11px;line-height:11px;color:#000;">0.6</div>
<div class="t" style="left:460px;width:200px;text-align:center;top:448.00px;font-size:11px;line-height:11px;color:#000;">0.</div>
<div class="t" style="left:535px;width:200px;text-align:center;top:448.00px;font-size:11px;line-height:11px;color:#000;">0.</div>
<div class="t" style="left:610px;width:200px;text-align:center;top:448.00px;font-size:11px;line-height:11px;color:#000;">0.</div>
<div class="t" style="left:685px;width:200px;text-align:center;top:448.00px;font-size:11px;line-height:11px;color:#000;">0.6</div>
<div class="t" style="left:760px;width:200px;text-align:center;top:448.00px;font-size:11px;line-height:11px;color:#fff;">0.</div>
<div class="t" style="left:835px;width:200px;text-align:center;top:448.00px;font-size:11px;line-height:11px;color:#000;">0.</div>
<div class="t" style="left:910px;width:200px;text-align:center;top:448.00px;font-size:11px;line-height:11px;color:#000;">0.</div>
<div class="r" style="left:4px;top:461px;width:40px;height:20px;background:#c0c0c0;border-top:1px solid #fff;border-left:1px solid #fff;border-right:1px solid #a0a0a0;border-bottom:1px solid #a0a0a0;box-sizing:border-box"></div>
<div class="r" style="left:823px;top:461px;width:75px;height:19px;background:#0078d7"></div>
<div class="r" style="left:44px;top:480px;width:1004px;height:1px;background:#dadada"></div>
<div class="t" style="left:-19px;width:200px;text-align:center;top:468.00px;font-size:11px;line-height:11px;color:#000;">13</div>
<div class="clip" style="left:119px;top:461px;width:163px;height:19px"><div class="t" style="left:3.5px;top:6.69px;font-size:11px;line-height:11px">Вітер по XY</div></div>
<div class="t" style="left:228px;width:200px;text-align:center;top:468.00px;font-size:11px;line-height:11px;color:#000;">1.5</div>
<div class="t" style="left:310px;width:200px;text-align:center;top:468.00px;font-size:11px;line-height:11px;color:#000;">0.</div>
<div class="t" style="left:385px;width:200px;text-align:center;top:468.00px;font-size:11px;line-height:11px;color:#000;">0.</div>
<div class="t" style="left:460px;width:200px;text-align:center;top:468.00px;font-size:11px;line-height:11px;color:#000;">0.6</div>
<div class="t" style="left:535px;width:200px;text-align:center;top:468.00px;font-size:11px;line-height:11px;color:#000;">0.</div>
<div class="t" style="left:610px;width:200px;text-align:center;top:468.00px;font-size:11px;line-height:11px;color:#000;">0.</div>
<div class="t" style="left:685px;width:200px;text-align:center;top:468.00px;font-size:11px;line-height:11px;color:#000;">0.</div>
<div class="t" style="left:760px;width:200px;text-align:center;top:468.00px;font-size:11px;line-height:11px;color:#fff;">0.6</div>
<div class="t" style="left:835px;width:200px;text-align:center;top:468.00px;font-size:11px;line-height:11px;color:#000;">0.</div>
<div class="t" style="left:910px;width:200px;text-align:center;top:468.00px;font-size:11px;line-height:11px;color:#000;">0.</div>
<div class="r" style="left:4px;top:481px;width:40px;height:20px;background:#c0c0c0;border-top:1px solid #fff;border-left:1px solid #fff;border-right:1px solid #a0a0a0;border-bottom:1px solid #a0a0a0;box-sizing:border-box"></div>
<div class="r" style="left:823px;top:481px;width:75px;height:19px;background:#0078d7"></div>
<div class="r" style="left:44px;top:500px;width:1004px;height:1px;background:#dadada"></div>
<div class="t" style="left:-19px;width:200px;text-align:center;top:488.00px;font-size:11px;line-height:11px;color:#000;">14</div>
<div class="clip" style="left:119px;top:481px;width:163px;height:19px"><div class="t" style="left:3.5px;top:6.69px;font-size:11px;line-height:11px">Маси для сейсміки</div></div>
<div class="t" style="left:228px;width:200px;text-align:center;top:488.00px;font-size:11px;line-height:11px;color:#000;">0.0</div>
<div class="t" style="left:310px;width:200px;text-align:center;top:488.00px;font-size:11px;line-height:11px;color:#000;">0.</div>
<div class="t" style="left:385px;width:200px;text-align:center;top:488.00px;font-size:11px;line-height:11px;color:#000;">0.</div>
<div class="t" style="left:460px;width:200px;text-align:center;top:488.00px;font-size:11px;line-height:11px;color:#000;">0.</div>
<div class="t" style="left:535px;width:200px;text-align:center;top:488.00px;font-size:11px;line-height:11px;color:#000;">0.</div>
<div class="t" style="left:610px;width:200px;text-align:center;top:488.00px;font-size:11px;line-height:11px;color:#000;">0.</div>
<div class="t" style="left:685px;width:200px;text-align:center;top:488.00px;font-size:11px;line-height:11px;color:#000;">0.</div>
<div class="t" style="left:760px;width:200px;text-align:center;top:488.00px;font-size:11px;line-height:11px;color:#fff;">0.</div>
<div class="t" style="left:835px;width:200px;text-align:center;top:488.00px;font-size:11px;line-height:11px;color:#000;">0.</div>
<div class="t" style="left:910px;width:200px;text-align:center;top:488.00px;font-size:11px;line-height:11px;color:#000;">0.</div>
<div class="r" style="left:4px;top:501px;width:40px;height:20px;background:#c0c0c0;border-top:1px solid #fff;border-left:1px solid #fff;border-right:1px solid #a0a0a0;border-bottom:1px solid #a0a0a0;box-sizing:border-box"></div>
<div class="r" style="left:823px;top:501px;width:75px;height:19px;background:#0078d7"></div>
<div class="r" style="left:44px;top:520px;width:1004px;height:1px;background:#dadada"></div>
<div class="t" style="left:-19px;width:200px;text-align:center;top:508.00px;font-size:11px;line-height:11px;color:#000;">15</div>
<div class="clip" style="left:119px;top:501px;width:163px;height:19px"><div class="t" style="left:3.5px;top:6.69px;font-size:11px;line-height:11px">Сейсміка - X</div></div>
<div class="t" style="left:228px;width:200px;text-align:center;top:508.00px;font-size:11px;line-height:11px;color:#000;">1.0</div>
<div class="t" style="left:310px;width:200px;text-align:center;top:508.00px;font-size:11px;line-height:11px;color:#000;">0.</div>
<div class="t" style="left:385px;width:200px;text-align:center;top:508.00px;font-size:11px;line-height:11px;color:#000;">0.</div>
<div class="t" style="left:460px;width:200px;text-align:center;top:508.00px;font-size:11px;line-height:11px;color:#000;">0.</div>
<div class="t" style="left:535px;width:200px;text-align:center;top:508.00px;font-size:11px;line-height:11px;color:#000;">1.</div>
<div class="t" style="left:610px;width:200px;text-align:center;top:508.00px;font-size:11px;line-height:11px;color:#000;">0.</div>
<div class="t" style="left:685px;width:200px;text-align:center;top:508.00px;font-size:11px;line-height:11px;color:#000;">0.</div>
<div class="t" style="left:760px;width:200px;text-align:center;top:508.00px;font-size:11px;line-height:11px;color:#fff;">0.</div>
<div class="t" style="left:835px;width:200px;text-align:center;top:508.00px;font-size:11px;line-height:11px;color:#000;">0.</div>
<div class="t" style="left:910px;width:200px;text-align:center;top:508.00px;font-size:11px;line-height:11px;color:#000;">0.</div>
<div class="r" style="left:4px;top:521px;width:40px;height:20px;background:#c0c0c0;border-top:1px solid #fff;border-left:1px solid #fff;border-right:1px solid #a0a0a0;border-bottom:1px solid #a0a0a0;box-sizing:border-box"></div>
<div class="r" style="left:823px;top:521px;width:75px;height:19px;background:#0078d7"></div>
<div class="r" style="left:44px;top:540px;width:1004px;height:1px;background:#dadada"></div>
<div class="t" style="left:-19px;width:200px;text-align:center;top:528.00px;font-size:11px;line-height:11px;color:#000;">16</div>
<div class="clip" style="left:119px;top:521px;width:163px;height:19px"><div class="t" style="left:3.5px;top:6.69px;font-size:11px;line-height:11px">Сейсмика - Y</div></div>
<div class="t" style="left:228px;width:200px;text-align:center;top:528.00px;font-size:11px;line-height:11px;color:#000;">1.0</div>
<div class="t" style="left:310px;width:200px;text-align:center;top:528.00px;font-size:11px;line-height:11px;color:#000;">0.</div>
<div class="t" style="left:385px;width:200px;text-align:center;top:528.00px;font-size:11px;line-height:11px;color:#000;">0.</div>
<div class="t" style="left:460px;width:200px;text-align:center;top:528.00px;font-size:11px;line-height:11px;color:#000;">0.</div>
<div class="t" style="left:535px;width:200px;text-align:center;top:528.00px;font-size:11px;line-height:11px;color:#000;">1.</div>
<div class="t" style="left:610px;width:200px;text-align:center;top:528.00px;font-size:11px;line-height:11px;color:#000;">0.</div>
<div class="t" style="left:685px;width:200px;text-align:center;top:528.00px;font-size:11px;line-height:11px;color:#000;">0.</div>
<div class="t" style="left:760px;width:200px;text-align:center;top:528.00px;font-size:11px;line-height:11px;color:#fff;">0.</div>
<div class="t" style="left:835px;width:200px;text-align:center;top:528.00px;font-size:11px;line-height:11px;color:#000;">0.</div>
<div class="t" style="left:910px;width:200px;text-align:center;top:528.00px;font-size:11px;line-height:11px;color:#000;">0.</div>
<div class="r" style="left:4px;top:541px;width:40px;height:20px;background:#c0c0c0;border-top:1px solid #fff;border-left:1px solid #fff;border-right:1px solid #a0a0a0;border-bottom:1px solid #a0a0a0;box-sizing:border-box"></div>
<div class="r" style="left:823px;top:541px;width:75px;height:19px;background:#0078d7"></div>
<div class="r" style="left:44px;top:560px;width:1004px;height:1px;background:#dadada"></div>
<div class="t" style="left:-19px;width:200px;text-align:center;top:548.00px;font-size:11px;line-height:11px;color:#000;">17</div>
<div class="clip" style="left:119px;top:541px;width:163px;height:19px"><div class="t" style="left:3.5px;top:6.69px;font-size:11px;line-height:11px">Сейсмика XY</div></div>
<div class="t" style="left:228px;width:200px;text-align:center;top:548.00px;font-size:11px;line-height:11px;color:#000;">1.0</div>
<div class="t" style="left:310px;width:200px;text-align:center;top:548.00px;font-size:11px;line-height:11px;color:#000;">0.</div>
<div class="t" style="left:385px;width:200px;text-align:center;top:548.00px;font-size:11px;line-height:11px;color:#000;">0.</div>
<div class="t" style="left:460px;width:200px;text-align:center;top:548.00px;font-size:11px;line-height:11px;color:#000;">0.</div>
<div class="t" style="left:535px;width:200px;text-align:center;top:548.00px;font-size:11px;line-height:11px;color:#000;">1.</div>
<div class="t" style="left:610px;width:200px;text-align:center;top:548.00px;font-size:11px;line-height:11px;color:#000;">0.</div>
<div class="t" style="left:685px;width:200px;text-align:center;top:548.00px;font-size:11px;line-height:11px;color:#000;">0.</div>
<div class="t" style="left:760px;width:200px;text-align:center;top:548.00px;font-size:11px;line-height:11px;color:#fff;">0.</div>
<div class="t" style="left:835px;width:200px;text-align:center;top:548.00px;font-size:11px;line-height:11px;color:#000;">0.</div>
<div class="t" style="left:910px;width:200px;text-align:center;top:548.00px;font-size:11px;line-height:11px;color:#000;">0.</div>
<div class="r" style="left:118px;top:201px;width:1px;height:360px;background:#dadada"></div>
<div class="r" style="left:372px;top:201px;width:1px;height:360px;background:#dadada"></div>
<div class="r" style="left:447px;top:201px;width:1px;height:360px;background:#dadada"></div>
<div class="r" style="left:522px;top:201px;width:1px;height:360px;background:#dadada"></div>
<div class="r" style="left:597px;top:201px;width:1px;height:360px;background:#dadada"></div>
<div class="r" style="left:672px;top:201px;width:1px;height:360px;background:#dadada"></div>
<div class="r" style="left:747px;top:201px;width:1px;height:360px;background:#dadada"></div>
<div class="r" style="left:822px;top:201px;width:1px;height:360px;background:#dadada"></div>
<div class="r" style="left:897px;top:201px;width:1px;height:360px;background:#dadada"></div>
<div class="r" style="left:972px;top:201px;width:1px;height:360px;background:#dadada"></div>
<div class="r" style="left:1047px;top:201px;width:1px;height:360px;background:#dadada"></div>
<div class="r" style="left:282px;top:201px;width:1px;height:360px;background:#000"></div>
<div class="r" style="left:4px;top:561px;width:1045px;height:17px;background:#f0f0f0"></div>
<div class="r" style="left:310px;top:563px;width:722px;height:14px;background:#cdcdcd"></div>
<svg class="r" style="left:8px;top:565px" width="9" height="9"><path d="M6.5 1L2.5 4.5L6.5 8" fill="none" stroke="#4a4a4a" stroke-width="2"/></svg>
<svg class="r" style="left:1036px;top:565px" width="9" height="9"><path d="M2.5 1L6.5 4.5L2.5 8" fill="none" stroke="#4a4a4a" stroke-width="2"/></svg>
<div class="r" style="left:1053px;top:161px;width:31px;height:24px;background:#e1e1e1;border:1px solid #adadad;box-sizing:border-box"></div>
<div class="r" style="left:1053px;top:191px;width:31px;height:24px;background:#e1e1e1;border:1px solid #adadad;box-sizing:border-box"></div>
<div class="r" style="left:1053px;top:220px;width:31px;height:24px;background:#e1e1e1;border:1px solid #adadad;box-sizing:border-box"></div>
<div class="r" style="left:1053px;top:254px;width:31px;height:24px;background:#e1e1e1;border:1px solid #adadad;box-sizing:border-box"></div>
<div class="r" style="left:1053px;top:290px;width:31px;height:24px;background:#e1e1e1;border:1px solid #adadad;box-sizing:border-box"></div>
<div class="r" style="left:1053px;top:321px;width:31px;height:24px;background:#e1e1e1;border:1px solid #adadad;box-sizing:border-box"></div>
<div class="r" style="left:1053px;top:352px;width:31px;height:24px;background:#e1e1e1;border:1px solid #adadad;box-sizing:border-box"></div>
<div class="r" style="left:1053px;top:378px;width:31px;height:24px;background:#e1e1e1;border:1px solid #adadad;box-sizing:border-box"></div>
<svg class="r" style="left:1060px;top:165px;opacity:1" width="16" height="16" viewBox="0 0 16 16"><defs><linearGradient id="pg2" x1="0" y1="0" x2="1" y2="1"><stop offset="0" stop-color="#8a7cc8"/><stop offset="1" stop-color="#2a1e60"/></linearGradient></defs><path d="M5.8 1.5h4.2v4.6h4.5v4.2h-4.5v4.6h-4.2v-4.6h-4.5v-4.2h4.5z" fill="url(#pg2)" stroke="#2a1e5e" stroke-width="1"/></svg>
<svg class="r" style="left:1060px;top:195px;opacity:1" width="16" height="16" viewBox="0 0 16 16"><path d="M3.2 0.5L8 9.6M12.6 0.5L9.2 9" stroke="#4a4a4a" stroke-width="1.1"/><g fill="#c4ecfa" stroke="#1a82b8" stroke-width="1.1"><ellipse cx="4.2" cy="12.4" rx="1.7" ry="3.3" transform="rotate(40 4.2 12.4)"/><ellipse cx="12.3" cy="12.4" rx="1.7" ry="3.3" transform="rotate(-40 12.3 12.4)"/></g></svg>
<svg class="r" style="left:1060px;top:223px;opacity:1" width="16" height="16" viewBox="0 0 16 16"><rect x="0.5" y="1.5" width="14.5" height="12" fill="#fff" stroke="#7a70b0"/><path d="M4.5 1.5v12M8 1.5v12M11.5 1.5v12M0.5 7.5h14.5M0.5 10.5h14.5" stroke="#a8a2d4" stroke-width="1"/><path d="M0.5 4.5h14.5" stroke="#d04848" stroke-width="1"/><path d="M7.5 2.5h-5l2.5 3.5l-2.5 3.5h5" fill="none" stroke="#1a1a5a" stroke-width="1.2"/><path d="M6.5 7l8 8.5M14.5 7l-8 8.5" stroke="#c42020" stroke-width="2.2"/></svg>
<svg class="r" style="left:1060px;top:258px;opacity:1" width="16" height="16" viewBox="0 0 16 16"><path d="M0.5 1.5h5l1 1h8v10h-14z" fill="#b4a070" stroke="#6e6040"/><path d="M0.5 2.5h14" stroke="#4a4030" stroke-width="1.2"/><path d="M5.5 4.5h6.5l3 3v8h-9.5z" fill="#fff" stroke="#6a60a0"/><path d="M7 9.5h6M7 11.5h6M7 13.5h6" stroke="#8a84b8" stroke-width="0.9"/><path d="M1.5 1.5L6.5 6.5" stroke="#111" stroke-width="1.5"/><path d="M8 8L3.8 7.2L7.2 3.8z" fill="#111"/></svg>
<svg class="r" style="left:1060px;top:293px;opacity:1" width="16" height="16" viewBox="0 0 16 16"><path d="M1 1h13l1 1v13h-14z" fill="#141414"/><rect x="3" y="1.6" width="9.6" height="5.6" fill="#e6ecf6"/><rect x="3.5" y="10.4" width="8" height="4.6" fill="#dcdcdc"/><rect x="5" y="11" width="2" height="3.6" fill="#222"/></svg>
<svg class="r" style="left:1060px;top:324px;opacity:1" width="16" height="16" viewBox="0 0 16 16"><path d="M14.5 3.5H3.5" stroke="#5e8e5e" stroke-width="2"/><path d="M0.5 3.5L4.5 0.5V6.5z" fill="#5e8e5e"/><path d="M2.4 14.2L11.5 5" stroke="#5a4a20" stroke-width="3.6"/><path d="M2.4 14.2L11.5 5" stroke="#f0c040" stroke-width="2.2"/><path d="M1 15.5L2.2 12.5L3.8 14z" fill="#333"/><circle cx="12.4" cy="3.8" r="1.5" fill="#e8a090"/><path d="M13.5 8.5H7.5" stroke="#c02828" stroke-width="2"/><path d="M5 8.5L8.5 6V11z" fill="#c02828"/><path d="M7 13H12.5" stroke="#107040" stroke-width="2"/><path d="M15.5 13L12 10.3V15.7z" fill="#107040"/></svg>
<svg class="r" style="left:1060px;top:356px;opacity:1" width="16" height="16" viewBox="0 0 16 16"><path d="M2 2L14.5 14.5" stroke="#b81a1a" stroke-width="3.4"/><path d="M14.5 1.5L1.8 14.5" stroke="#cc2020" stroke-width="2.4"/></svg>
<svg class="r" style="left:1060px;top:382px;opacity:1" width="16" height="16" viewBox="0 0 16 16"><text x="8" y="14.5" text-anchor="middle" font-family="Liberation Serif" font-weight="bold" font-size="18" fill="#3f7020">?</text></svg>
<div class="r" style="left:3px;top:584px;width:216px;height:116px;background:#fff;border:1px solid #828790;box-sizing:border-box"></div>
<div class="r" style="left:5px;top:651px;width:211px;height:13px;background:#0078d7"></div>
<div class="t " style="left:6px;top:588.00px;font-size:11px;line-height:11px;color:#000;"><span class="si">I</span>. Основне сполучення(<span class="si">I</span> ГС)</div>
<div class="t " style="left:6px;top:601.00px;font-size:11px;line-height:11px;color:#000;"><span class="si">I</span><span class="si">I</span>. Аварійне сполучення(<span class="si">I</span> ГС)</div>
<div class="t " style="left:6px;top:614.00px;font-size:11px;line-height:11px;color:#000;"><span class="si">I</span><span class="si">I</span><span class="si">I</span>. Сейсмічне сполучення(<span class="si">I</span> ГС)</div>
<div class="t " style="left:6px;top:627.00px;font-size:11px;line-height:11px;color:#000;"><span class="si">I</span>V.Характеристичне сполучення(<span class="si">I</span><span class="si">I</span> ГС)</div>
<div class="t " style="left:6px;top:640.00px;font-size:11px;line-height:11px;color:#000;">V.Часте сполучення(<span class="si">I</span><span class="si">I</span> ГС)</div>
<div class="t " style="left:6px;top:653.00px;font-size:11px;line-height:11px;color:#fff;">V<span class="si">I</span>.Квазіпостійне сполучення(<span class="si">I</span><span class="si">I</span> ГС)</div>
<div class="r" style="left:67px;top:707px;width:78px;height:21px;background:#e1e1e1;border:1px solid #adadad;box-sizing:border-box"></div>
<div class="t" style="left:6px;width:200px;text-align:center;top:712.50px;font-size:11px;line-height:11px;color:#000;">Додати</div>
<div class="r" style="left:223px;top:589px;width:250px;height:32px;background:#ebebeb"></div>
<svg class="r" style="left:0px;top:0px" width="1089" height="775" font-family="Liberation Serif" fill="#333"><rect x="223" y="589" width="250" height="32" fill="#eaeceb"/><path d="M242.5 595.0 L242 592.3 H230 L236.2 600.5 L229.8 608.9 H242.2 L243 606.0" fill="none" stroke="#333" stroke-width="1.1"/><path d="M230.5 592.5 L236.6 600.5" stroke="#333" stroke-width="1.6"/><path d="M300.5 595.0 L300 592.3 H288 L294.2 600.5 L287.8 608.9 H300.2 L301 606.0" fill="none" stroke="#333" stroke-width="1.1"/><path d="M288.5 592.5 L294.6 600.5" stroke="#333" stroke-width="1.6"/><text x="245.3" y="605" font-size="14.5">G</text><text x="257" y="612" font-size="9.5">k, j</text><text x="229" y="618.5" font-size="9">j ≥1</text><text x="272.5" y="604.5" font-size="14">+</text><text x="304" y="605" font-size="13.5">ψ</text><text x="314.5" y="612" font-size="9.5">2,i</text><text x="323" y="605" font-size="14.5">Q</text><text x="337" y="612" font-size="9.5">k, i</text><text x="288" y="618.5" font-size="9">i &gt;1</text><text x="358" y="606" font-size="12.2">(6.16b)</text></svg>
<div class="t " style="left:585.7px;top:598.00px;font-size:11px;line-height:11px;color:#000;">Таблиця</div>
<svg class="r" style="left:642px;top:597px" width="13" height="13"><circle cx="6.5" cy="6.5" r="6" fill="#fff" stroke="#333"/><circle cx="6.5" cy="6.5" r="3.5" fill="#333"/></svg>
<div class="t " style="left:657.6px;top:600.00px;font-size:10px;line-height:10px;color:#000;">A</div>
<svg class="r" style="left:676px;top:597px" width="13" height="13"><circle cx="6.5" cy="6.5" r="6" fill="#fff" stroke="#333"/></svg>
<div class="t " style="left:691.5px;top:600.00px;font-size:10px;line-height:10px;color:#000;">B</div>
<svg class="r" style="left:711px;top:597px" width="13" height="13"><circle cx="6.5" cy="6.5" r="6" fill="#fff" stroke="#333"/></svg>
<div class="t " style="left:726.2px;top:600.00px;font-size:10px;line-height:10px;color:#000;">C</div>
<div class="r" style="left:484px;top:627px;width:13px;height:13px;background:#fff;border:1px solid #333;box-sizing:border-box"></div>
<div class="t " style="left:500px;top:629.00px;font-size:11px;line-height:11px;color:#000;">Враховувати умову 4.29 Єврокод 8</div>
<svg class="r" style="left:223px;top:650px" width="13" height="13"><circle cx="6.5" cy="6.5" r="6" fill="#fff" stroke="#bcbcbc"/><circle cx="6.5" cy="6.5" r="3.5" fill="#bcbcbc"/></svg>
<div class="t " style="left:238.6px;top:652.00px;font-size:11px;line-height:11px;color:#6d6d6d;">ф-ла 6.10</div>
<svg class="r" style="left:295px;top:650px" width="13" height="13"><circle cx="6.5" cy="6.5" r="6" fill="#fff" stroke="#bcbcbc"/></svg>
<div class="t " style="left:310.5px;top:652.00px;font-size:11px;line-height:11px;color:#6d6d6d;">ф-ла 6.10а</div>
<svg class="r" style="left:373px;top:650px" width="13" height="13"><circle cx="6.5" cy="6.5" r="6" fill="#fff" stroke="#bcbcbc"/></svg>
<div class="t " style="left:389px;top:652.00px;font-size:11px;line-height:11px;color:#6d6d6d;">ф-ла 6.10б</div>
<svg class="r" style="left:295px;top:675px" width="13" height="13"><circle cx="6.5" cy="6.5" r="6" fill="#fff" stroke="#bcbcbc"/></svg>
<div class="t " style="left:310.5px;top:677.00px;font-size:11px;line-height:11px;color:#6d6d6d;">зміни до п. НП2.2.3.2 від 30.12.21</div>
<div class="r" style="left:225px;top:699px;width:13px;height:13px;background:#fff;border:1px solid #333;box-sizing:border-box"></div>
<svg class="r" style="left:225px;top:699px" width="13" height="13"><path d="M2.5 6.5L5 9L10.5 3.5" fill="none" stroke="#333" stroke-width="1.1"/></svg>
<div class="t " style="left:240.5px;top:701.00px;font-size:11px;line-height:11px;color:#000;">Сполучення SUP</div>
<div class="r" style="left:225px;top:720px;width:13px;height:13px;background:#fff;border:1px solid #333;box-sizing:border-box"></div>
<svg class="r" style="left:225px;top:720px" width="13" height="13"><path d="M2.5 6.5L5 9L10.5 3.5" fill="none" stroke="#333" stroke-width="1.1"/></svg>
<div class="t " style="left:240.5px;top:722.00px;font-size:11px;line-height:11px;color:#000;">Сполучення <span class="si">I</span>NF</div>
<div class="r" style="left:369px;top:699px;width:13px;height:13px;background:#fff;border:1px solid #333;box-sizing:border-box"></div>
<div class="t " style="left:384px;top:701.00px;font-size:11px;line-height:11px;color:#000;">G + W</div>
<div class="r" style="left:369px;top:720px;width:13px;height:13px;background:#fff;border:1px solid #333;box-sizing:border-box"></div>
<div class="t " style="left:384px;top:722.00px;font-size:11px;line-height:11px;color:#000;">G + Sn</div>
<div class="r" style="left:225px;top:743px;width:13px;height:13px;background:#fff;border:1px solid #c8c8c8;box-sizing:border-box"></div>
<div class="t " style="left:240.5px;top:745.00px;font-size:11px;line-height:11px;color:#6d6d6d;">Показать произведение всех коэффициентов Yf*psi</div>
<div class="r" style="left:574px;top:741px;width:85px;height:21px;background:#e1e1e1;border:1px solid #adadad;box-sizing:border-box"></div>
<div class="t" style="left:516.5px;width:200px;text-align:center;top:747.00px;font-size:11px;line-height:11px;color:#000;">Коефіцієнти</div>
<svg class="r" style="left:1076px;top:762px" width="12" height="12"><path d="M11 1L1 11M11 5L5 11M11 9L9 11" stroke="#777" stroke-width="1.2"/></svg>
<div class="r" style="left:404px;top:282px;width:280px;height:211px;box-shadow:0 0 12px 3px rgba(0,0,0,0.28)"></div>
<div class="r" style="left:404px;top:282px;width:280px;height:211px;background:#f0f0f0;border:1px solid #5a5a5a;box-sizing:border-box"></div>
<div class="r" style="left:405px;top:283px;width:278px;height:30px;background:#fff"></div>
<div class="t " style="left:413.3px;top:292.00px;font-size:12px;line-height:12px;color:#000;">Ім&#x27;я сполучення</div>
<svg class="r" style="left:662px;top:291px" width="12" height="12"><path d="M1 1L11 11M11 1L1 11" stroke="#111" stroke-width="1.1"/></svg>
<div class="r" style="left:416px;top:328px;width:257px;height:23px;background:#ff8080;border:1px solid #7a7a7a;box-sizing:border-box"></div>
<div class="t " style="left:421.3px;top:334.00px;font-size:11px;line-height:11px;color:#800000;">РСН9_<span class="si">I</span>V_6.14b_sup</div>
<div class="t " style="left:436.5px;top:372.00px;font-size:11px;line-height:11px;color:#000;">Сполучення використовувати:</div>
<div class="r" style="left:416px;top:394px;width:245px;height:20px;background:#e07880;border:1px solid #0078d7;box-sizing:border-box"></div>
<div class="t " style="left:420px;top:400.00px;font-size:11px;line-height:11px;color:#800000;">для всіх випадків</div>
<svg class="r" style="left:647px;top:401px" width="10" height="6"><path d="M0.5 0.5L5 5L9.5 0.5" fill="none" stroke="#800000" stroke-width="1"/></svg>
<div class="r" style="left:417px;top:455px;width:73px;height:21px;background:#e1e1e1;border:2px solid #0078d7;box-sizing:border-box"></div>
<div class="t" style="left:353px;width:200px;text-align:center;top:461.00px;font-size:11px;line-height:11px;color:#000;">OK</div>
<div class="r" style="left:598px;top:455px;width:73px;height:21px;background:#e1e1e1;border:1px solid #adadad;box-sizing:border-box"></div>
<div class="t" style="left:534px;width:200px;text-align:center;top:461.00px;font-size:11px;line-height:11px;color:#000;">Cancel</div>
<div class="r" style="left:416px;top:413px;width:245px;height:43px;box-shadow:2px 2px 3px rgba(0,0,0,0.3)"></div>
<div class="r" style="left:416px;top:413px;width:245px;height:43px;background:#ff8080;border:1px solid #0078d7;border-top:none;box-sizing:border-box"></div>
<div class="r" style="left:417px;top:414px;width:243px;height:15px;background:#7a3b6e"></div>
<div class="t " style="left:418.7px;top:418.00px;font-size:11px;line-height:11px;color:#f0a8c0;">для всіх випадків</div>
<div class="t " style="left:418.7px;top:431.00px;font-size:11px;line-height:11px;color:#800000;">для розрахунку тріщин (АРМ)</div>
<div class="t " style="left:418.7px;top:444.00px;font-size:11px;line-height:11px;color:#800000;">для прогинів (СТК)</div>
</body></html>
